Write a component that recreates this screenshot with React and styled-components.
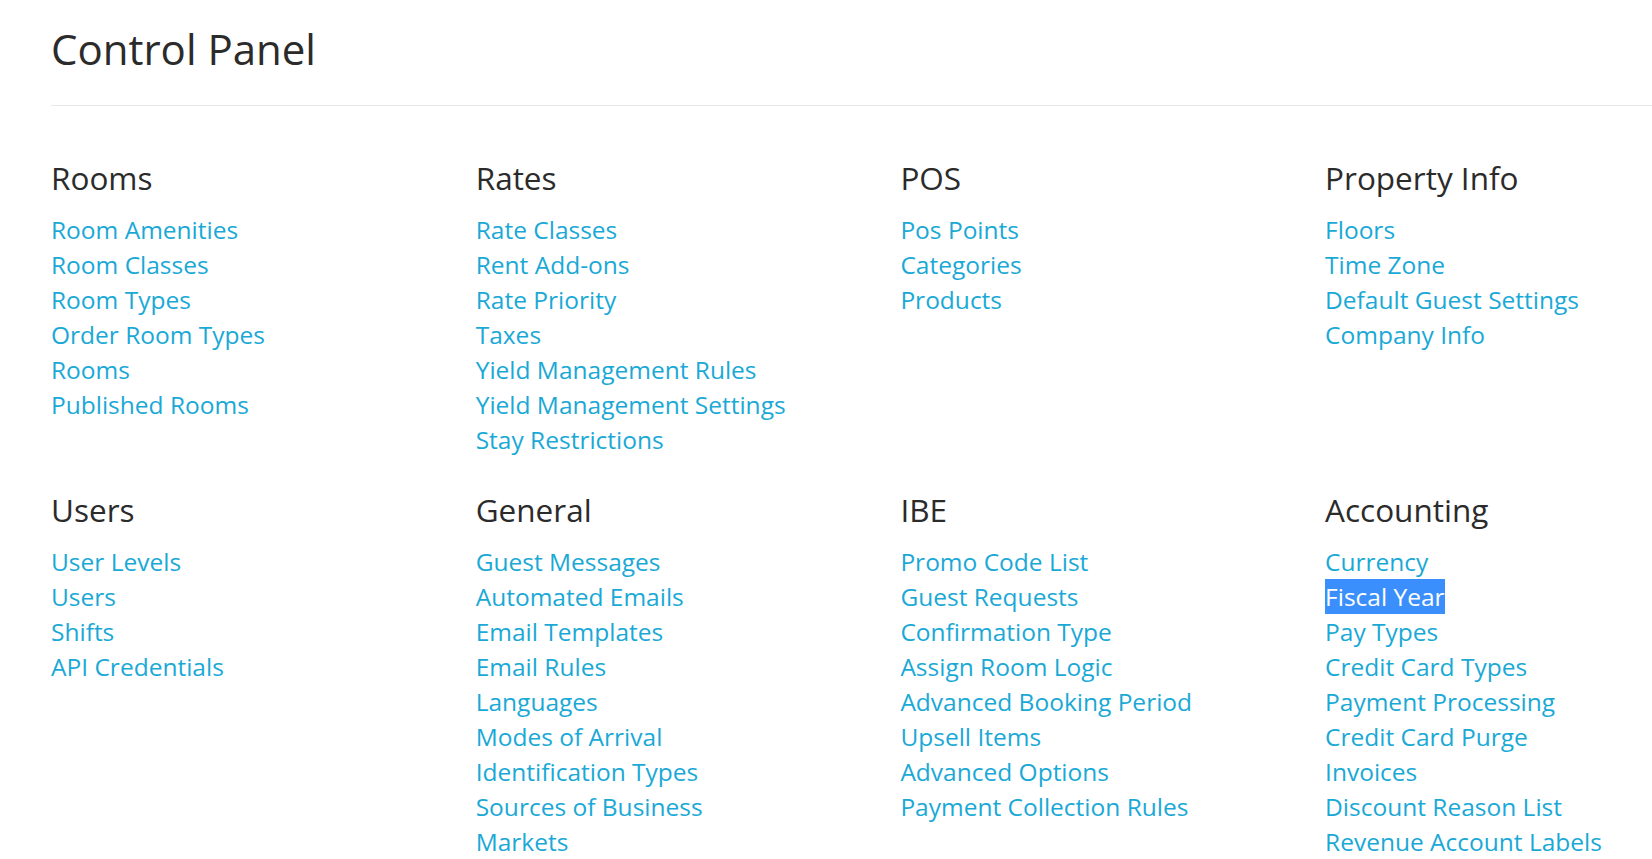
import React from 'react';
import styled, { createGlobalStyle } from 'styled-components';

const GlobalStyle = createGlobalStyle`
  html, body {
    margin: 0;
    padding: 0;
    background: #fff;
  }
  body {
    font-family: 'Open Sans', 'Noto Sans', sans-serif;
    color: #333;
  }
`;

const sections = [
  {
    title: 'Rooms',
    links: ['Room Amenities', 'Room Classes', 'Room Types', 'Order Room Types', 'Rooms', 'Published Rooms'],
  },
  {
    title: 'Rates',
    links: [
      'Rate Classes',
      'Rent Add-ons',
      'Rate Priority',
      'Taxes',
      'Yield Management Rules',
      'Yield Management Settings',
      'Stay Restrictions',
    ],
  },
  {
    title: 'POS',
    links: ['Pos Points', 'Categories', 'Products'],
  },
  {
    title: 'Property Info',
    links: ['Floors', 'Time Zone', 'Default Guest Settings', 'Company Info'],
  },
  {
    title: 'Users',
    links: ['User Levels', 'Users', 'Shifts', 'API Credentials'],
  },
  {
    title: 'General',
    links: [
      'Guest Messages',
      'Automated Emails',
      'Email Templates',
      'Email Rules',
      'Languages',
      'Modes of Arrival',
      'Identification Types',
      'Sources of Business',
      'Markets',
    ],
  },
  {
    title: 'IBE',
    links: [
      'Promo Code List',
      'Guest Requests',
      'Confirmation Type',
      'Assign Room Logic',
      'Advanced Booking Period',
      'Upsell Items',
      'Advanced Options',
      'Payment Collection Rules',
    ],
  },
  {
    title: 'Accounting',
    links: [
      'Currency',
      'Fiscal Year',
      'Pay Types',
      'Credit Card Types',
      'Payment Processing',
      'Credit Card Purge',
      'Invoices',
      'Discount Reason List',
      'Revenue Account Labels',
    ],
  },
];

export default function App() {
  return (
    <Page>
      <GlobalStyle />
      <Title>Control Panel</Title>
      <Divider />
      <Grid>
        {sections.map((section) => (
          <Section key={section.title}>
            <Heading>{section.title}</Heading>
            <LinkList>
              {section.links.map((link) => (
                <li key={link}>
                  <LinkItem href="#" $selected={link === 'Fiscal Year'}>
                    {link}
                  </LinkItem>
                </li>
              ))}
            </LinkList>
          </Section>
        ))}
      </Grid>
    </Page>
  );
}

const Page = styled.div`
  padding: 22px 0 0 51px;
  overflow: hidden;
`;

const Title = styled.h1`
  margin: 0;
  font-size: 42px;
  font-weight: 400;
  line-height: 54px;
  color: #2b2b2b;
`;

const Divider = styled.hr`
  margin: 29px 0 0 0;
  border: 0;
  border-top: 1px solid #e8e8e8;
`;

const Grid = styled.div`
  display: grid;
  grid-template-columns: repeat(4, 424.7px);
  row-gap: 34px;
  padding-top: 53px;
`;

const Section = styled.section`
  display: flex;
  flex-direction: column;
`;

const Heading = styled.h2`
  margin: 0 0 15px;
  font-size: 31.5px;
  font-weight: 400;
  line-height: 38px;
  color: #2b2b2b;
`;

const LinkList = styled.ul`
  margin: 0;
  padding: 0;
  list-style: none;
  li {
    line-height: 35px;
    height: 35px;
  }
`;

const LinkItem = styled.a`
  font-size: 24.5px;
  text-decoration: none;
  color: ${(p) => (p.$selected ? '#fff' : '#1aa9d6')};
  background: ${(p) => (p.$selected ? '#3a8ffc' : 'transparent')};
  padding: 1px 0;
`;
